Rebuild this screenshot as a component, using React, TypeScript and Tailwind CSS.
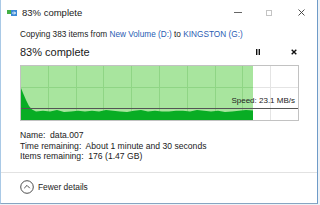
const GREEN_END = 233; // chart px where the copied portion stops
const W = 279;
const H = 56;

function throughput(): string {
  // dark-green area: start spike, then a flat band with a little jitter
  const jitter = [2, 1, 2, 0, 3, 2, 1, 2, 1, 2, 0, 1, 2, 3, 1, 0, 2, 1, 2, 2, 1, 1, 2, 0, 1, 2, 1, 3, 2, 1, 0, 1, 2, 1];
  const pts: string[] = ['1,55', '1,23', '3,28', '6,35', '9,41', '12,44.5'];
  for (let x = 16, i = 0; x < GREEN_END; x += 7, i++) {
    pts.push(`${x},${45 + jitter[i % jitter.length] * 0.7}`);
  }
  pts.push(`${GREEN_END},45.5`, `${GREEN_END},55`);
  return pts.join(' ');
}

function SpeedChart() {
  const cols = Array.from({ length: 9 }, (_, i) => Math.round((i + 1) * 27.8) + 0.5);
  return (
    <div className="relative mt-[5px] h-[56px] w-[279px]">
      <svg width={W} height={H} viewBox={`0 0 ${W} ${H}`} className="block">
        <rect x="0" y="0" width={W} height={H} fill="#ffffff" />
        <rect x="1" y="1" width={GREEN_END - 1} height={H - 2} fill="#a8e59e" />
        {cols.map((x) => (
          <line key={x} x1={x} y1="1" x2={x} y2={H - 1} stroke={x < GREEN_END ? '#8fd585' : '#e4e4e4'} />
        ))}
        <line x1="1" y1="22.5" x2={GREEN_END} y2="22.5" stroke="#8fd585" />
        <line x1={GREEN_END} y1="22.5" x2={W - 1} y2="22.5" stroke="#e4e4e4" />
        <polygon points={throughput()} fill="#08ad24" />
        <line x1="1" y1="43.5" x2={W - 1} y2="43.5" stroke="#555555" />
        <rect x="0.5" y="0.5" width={W - 1} height={H - 1} fill="none" stroke="#c2c2c2" />
      </svg>
      <span className="absolute right-[4px] top-[31px] text-[8px] leading-[10px] text-[#222]">
        Speed: 23.1 MB/s
      </span>
    </div>
  );
}

function CopyIcon() {
  return (
    <svg width="11" height="7" viewBox="0 0 11 7" className="block">
      <rect x="0" y="1" width="4" height="4" fill="#44b044" />
      <rect x="4" y="1" width="6" height="6" fill="#3b8ad6" />
      <path d="M5 4h3.5M7 2.5L8.5 4L7 5.5" stroke="#ffffff" strokeWidth="0.9" fill="none" />
    </svg>
  );
}

export default function App() {
  return (
    <div
      className="h-[205px] w-[320px] overflow-hidden bg-[#eef2f6]"
      style={{ fontFamily: '"Liberation Sans", Arial, sans-serif' }}
    >
      <div className="flex h-[204px] w-[318px] flex-col border-x border-b border-l-[#a9c9e6] border-r-[#6f9bc8] border-b-[#86a5c2] bg-white">
        {/* title bar */}
        <div className="flex h-[25px] shrink-0 items-center pl-[6px]">
          <CopyIcon />
          <span className="ml-[4px] text-[9.5px] leading-[12px] text-[#1a1a1a]">83% complete</span>
          <div className="ml-auto flex h-full items-center">
            <svg width="8" height="1" className="mr-[24px] block">
              <rect width="8" height="1" fill="#666" />
            </svg>
            <svg width="6" height="6" className="mr-[26px] block">
              <rect x="0.5" y="0.5" width="5" height="5" fill="none" stroke="#c4c4c4" />
            </svg>
            <svg width="7" height="7" viewBox="0 0 7 7" className="mr-[12px] block">
              <path d="M0.5 0.5L6.5 6.5M6.5 0.5L0.5 6.5" stroke="#3a3a3a" strokeWidth="0.9" />
            </svg>
          </div>
        </div>

        {/* body */}
        <div className="flex flex-col pl-[19px] pt-[4px]">
          <div className="whitespace-nowrap text-[8.25px] leading-[12px] text-[#1a1a1a]">
            Copying 383 items from <span className="text-[#2a5db3]">New Volume (D:)</span> to{' '}
            <span className="text-[#2a5db3]">KINGSTON (G:)</span>
          </div>
          <div className="mt-[3px] flex h-[16px] items-center">
            <span className="text-[11px] leading-[16px] text-[#1a1a1a]">83% complete</span>
            <div className="ml-auto flex items-center pr-[20px]">
              <svg width="4" height="6" viewBox="0 0 4 6" className="block">
                <rect x="0" y="0" width="1.4" height="6" fill="#111" />
                <rect x="2.6" y="0" width="1.4" height="6" fill="#111" />
              </svg>
              <svg width="6" height="6" viewBox="0 0 6 6" className="ml-[31px] block">
                <path d="M0.7 0.7L5.3 5.3M5.3 0.7L0.7 5.3" stroke="#111" strokeWidth="1.4" />
              </svg>
            </div>
          </div>
          <SpeedChart />
          <div className="mt-[9px] flex flex-col whitespace-nowrap text-[8.6px] leading-[10.5px] text-[#1a1a1a]">
            <span>Name:&nbsp; data.007</span>
            <span>Time remaining:&nbsp; About 1 minute and 30 seconds</span>
            <span>Items remaining:&nbsp; 176 (1.47 GB)</span>
          </div>
        </div>

        <div className="mt-[10px] border-t border-[#e2e2e2]" />
        <div className="flex items-center pl-[19px] pt-[7px]">
          <svg width="14" height="14" viewBox="0 0 14 14" className="block">
            <circle cx="7" cy="7" r="6.3" fill="none" stroke="#3a3a3a" strokeWidth="0.9" />
            <path d="M4.2 8.2L7 5.4L9.8 8.2" fill="none" stroke="#3a3a3a" strokeWidth="0.9" />
          </svg>
          <span className="ml-[4px] text-[8.4px] leading-[14px] text-[#1a1a1a]">Fewer details</span>
        </div>
      </div>
    </div>
  );
}
